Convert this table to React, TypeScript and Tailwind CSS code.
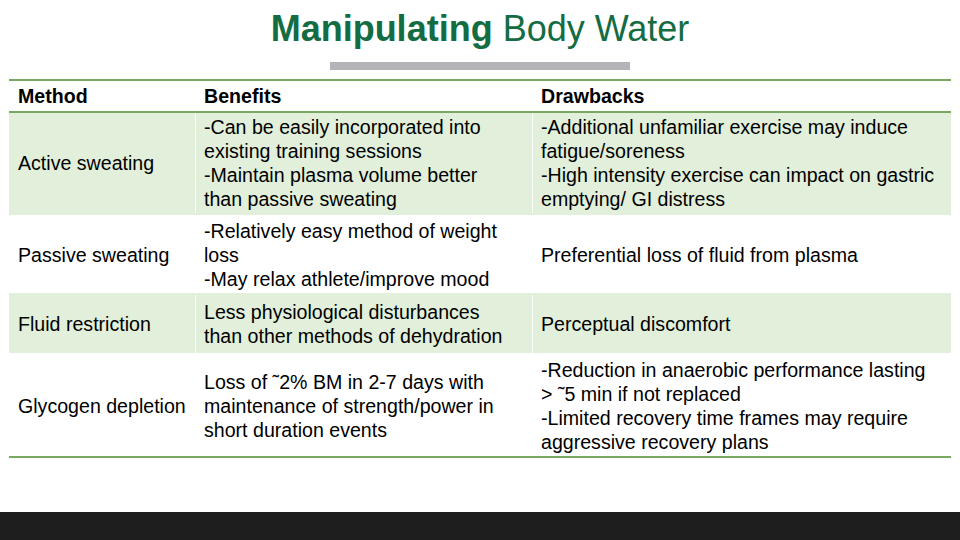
const rows = [
  {
    method: "Active sweating",
    benefits: [
      "-Can be easily incorporated into",
      "existing training sessions",
      "-Maintain plasma volume better",
      "than passive sweating",
    ],
    drawbacks: [
      "-Additional unfamiliar exercise may induce",
      "fatigue/soreness",
      "-High intensity exercise can impact on gastric",
      "emptying/ GI distress",
    ],
    shaded: true,
    height: "h-[102px] pb-[2px]",
  },
  {
    method: "Passive sweating",
    benefits: [
      "-Relatively easy method of weight",
      "loss",
      "-May relax athlete/improve mood",
    ],
    drawbacks: ["Preferential loss of fluid from plasma"],
    shaded: false,
    height: "h-[78px] pt-[2px]",
  },
  {
    method: "Fluid restriction",
    benefits: ["Less physiological disturbances", "than other methods of dehydration"],
    drawbacks: ["Perceptual discomfort"],
    shaded: true,
    height: "h-[60px] pt-[2px]",
  },
  {
    method: "Glycogen depletion",
    benefits: [
      "Loss of \u02dc2% BM in 2-7 days with",
      "maintenance of strength/power in",
      "short duration events",
    ],
    drawbacks: [
      "-Reduction in anaerobic performance lasting",
      "> \u02dc5 min if not replaced",
      "-Limited recovery time frames may require",
      "aggressive recovery plans",
    ],
    shaded: false,
    height: "h-[101px] pt-[2px]",
  },
];

function Lines({ lines }: { lines: string[] }) {
  return (
    <div>
      {lines.map((l, i) => (
        <div key={i} className="whitespace-nowrap">
          {l}
        </div>
      ))}
    </div>
  );
}

export default function App() {
  return (
    <div
      className="w-[960px] h-[540px] bg-white flex flex-col overflow-hidden text-black"
      style={{ fontFamily: '"Liberation Sans", Arial, sans-serif' }}
    >
      <h1 className="pt-[9px] h-[49px] text-center text-[36px] leading-[40px] text-[#146c43]">
        <span className="font-bold">Manipulating</span> Body Water
      </h1>
      <div className="mx-auto mt-[13px] w-[300px] h-[8px] bg-[#b4b4b8]" />

      <div className="mt-[9px] ml-[9px] w-[942px] text-[19.6px] leading-[24px]">
        <div className="grid grid-cols-[187px_337px_418px] h-[34px] border-y-2 border-[#78a860] font-bold items-center">
          <div className="pl-[9px]">Method</div>
          <div className="pl-[8px]">Benefits</div>
          <div className="pl-[8px]">Drawbacks</div>
        </div>
        {rows.map((r, i) => (
          <div
            key={i}
            className={`grid grid-cols-[187px_337px_418px] ${r.height} ${
              r.shaded ? "bg-[#e2efda]" : "bg-white"
            } ${i === rows.length - 1 ? "border-b-2 border-[#78a860] box-content" : ""}`}
          >
            <div className="pl-[9px] flex items-center border-r border-white/80 whitespace-nowrap">
              {r.method}
            </div>
            <div className="pl-[8px] flex items-center border-r border-white/80">
              <Lines lines={r.benefits} />
            </div>
            <div className="pl-[8px] flex items-center">
              <Lines lines={r.drawbacks} />
            </div>
          </div>
        ))}
      </div>

      <div className="mt-auto h-[28px] bg-[#1e1e1e]" />
    </div>
  );
}
